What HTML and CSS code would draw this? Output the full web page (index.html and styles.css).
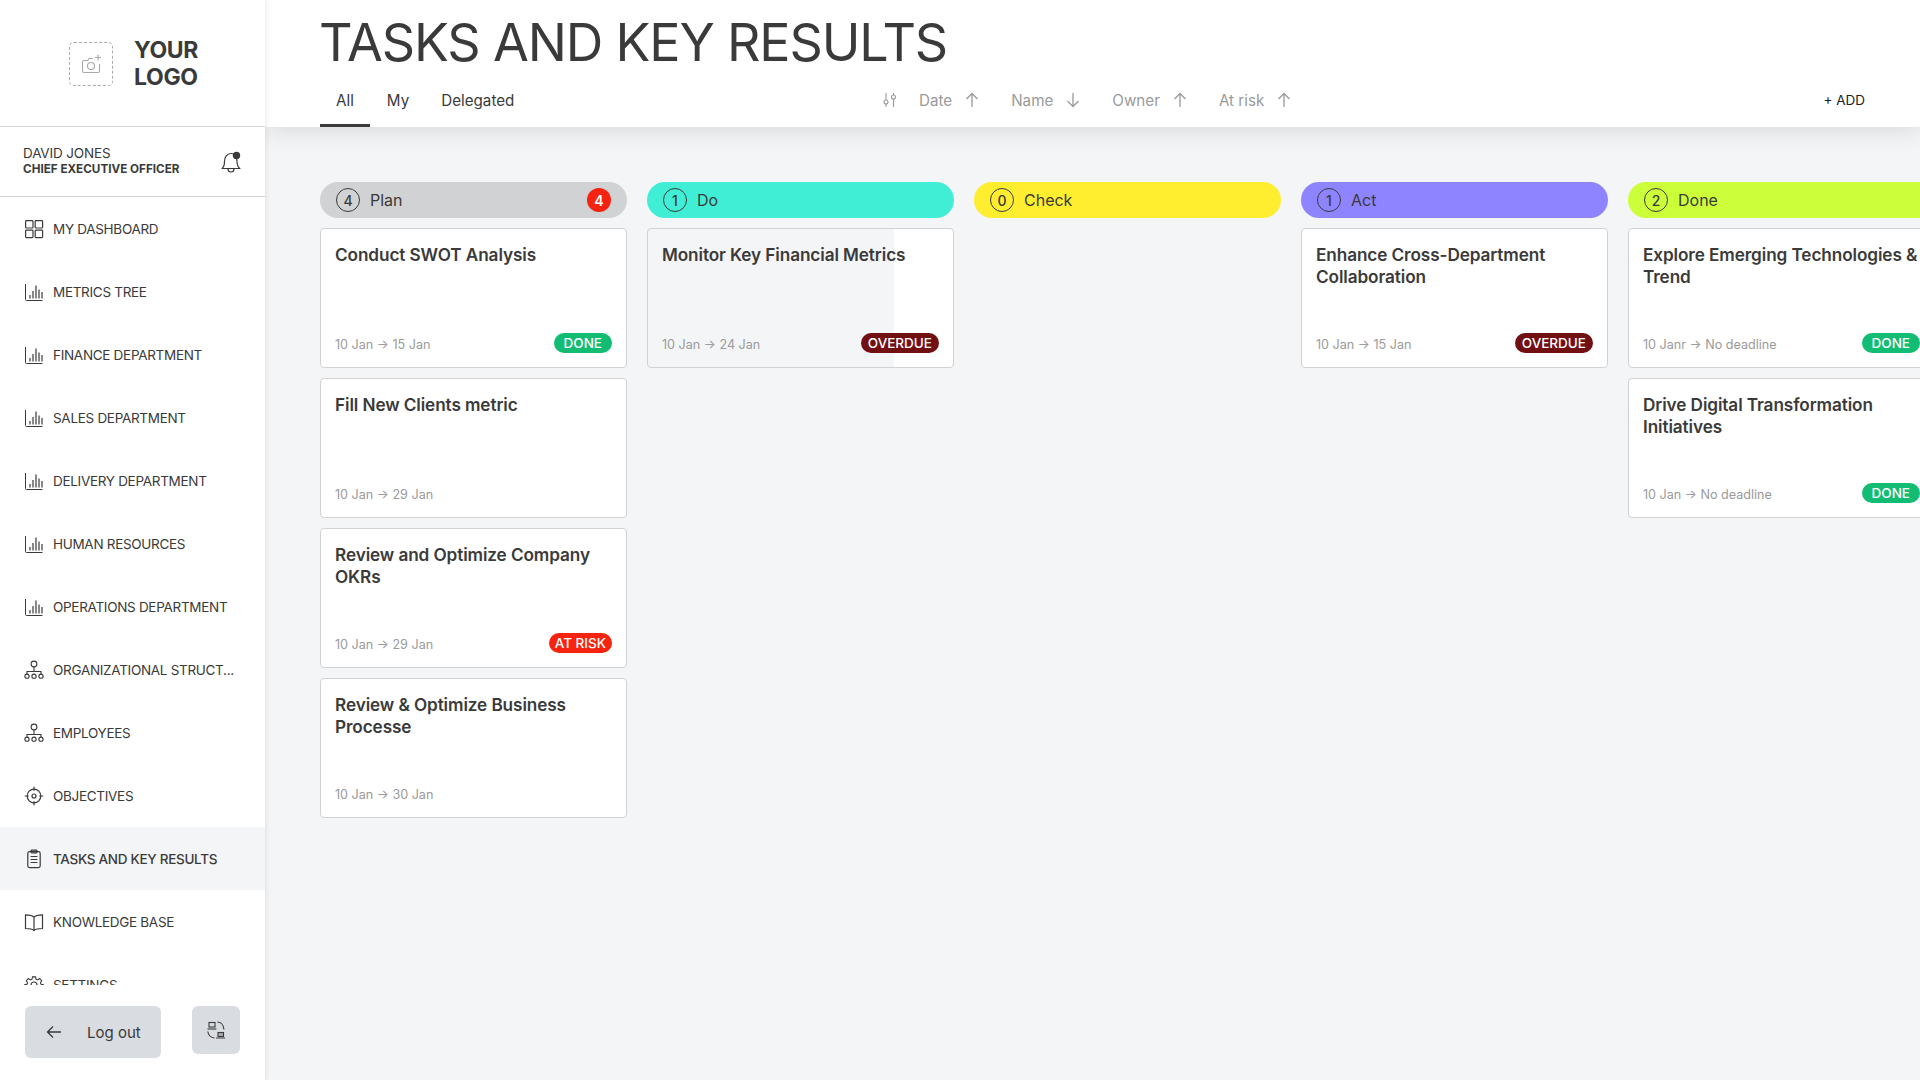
FILE: index.html
```html
<!DOCTYPE html>
<html lang="en">
<head>
<meta charset="utf-8">
<title>Tasks and Key Results</title>
<link rel="stylesheet" href="styles.css">
</head>
<body>
<svg class="defs" width="0" height="0" aria-hidden="true">
  <symbol id="i-dash" viewBox="0 0 22 22"><g fill="none" stroke="currentColor" stroke-width="1.2"><rect x="2.6" y="2.6" width="7.4" height="7.4" rx=".8"/><rect x="12.2" y="2.6" width="7.4" height="7.4" rx=".8"/><rect x="2.6" y="12.2" width="7.4" height="7.4" rx=".8"/><rect x="12.2" y="12.2" width="7.4" height="7.4" rx=".8"/></g></symbol>
  <symbol id="i-chart" viewBox="0 0 22 22"><g fill="none" stroke="currentColor" stroke-width="1"><path d="M2.5 3v15.5a1 1 0 0 0 1 1h16"/><path d="M7 14v3.5M10 10v7.5M13 4.5v13M16 8.5v9M19 11v6.5" stroke-width="1.2"/></g></symbol>
  <symbol id="i-org" viewBox="0 0 22 22"><g fill="none" stroke="currentColor" stroke-width="1.1"><circle cx="11" cy="5" r="2.9"/><path d="M11 8v5M4 15v-2.5h14V15"/><circle cx="4" cy="17.2" r="2.1"/><circle cx="11" cy="17.2" r="2.1"/><circle cx="18" cy="17.2" r="2.1"/></g></symbol>
  <symbol id="i-target" viewBox="0 0 22 22"><g fill="none" stroke="currentColor" stroke-width="1.2"><circle cx="11" cy="11" r="6.8"/><circle cx="11" cy="11" r="2"/><path d="M11 1.8v4M11 16.2v4M1.8 11h4M16.2 11h4"/></g></symbol>
  <symbol id="i-clip" viewBox="0 0 22 22"><g fill="none" stroke="currentColor" stroke-width="1.2"><rect x="4.8" y="3.6" width="12.4" height="16" rx="1.8"/><rect x="8" y="2.2" width="6" height="2.6" rx=".8"/><path d="M7.6 8.5h6.8M7.6 11.5h6.8M7.6 14.5h6.8"/></g></symbol>
  <symbol id="i-book" viewBox="0 0 22 22"><g fill="none" stroke="currentColor" stroke-width="1.2"><path d="M11 6.200C9.500 4.200 7 3.800 2.500 3.800v13.700c4.500 0 7 .4 8.500 2 1.500-1.600 4-2 8.500-2V3.800C15 3.800 12.500 4.200 11 6.200zM11 6.200v13.300" stroke-linejoin="round"/></g></symbol>
  <symbol id="i-gear" viewBox="0 0 22 22"><g fill="none" stroke="currentColor" stroke-width="1.2"><circle cx="11" cy="11" r="3"/><path d="M9.300 2.500h3.400l.5 2.600 1.800.8 2.200-1.500 2.400 2.400-1.500 2.200.8 1.800 2.500.5v3.400l-2.500.5-.8 1.800 1.500 2.200-2.400 2.400-2.200-1.500-1.800.8-.5 2.500H9.300l-.5-2.500-1.800-.8-2.200 1.500-2.400-2.400 1.500-2.200-.8-1.800-2.500-.5v-3.400l2.500-.5.8-1.800-1.500-2.200 2.400-2.400 2.200 1.500 1.800-.8z" transform="translate(1.100 .6) scale(.9)"/></g></symbol>
  <symbol id="i-up" viewBox="0 0 14 16"><path d="M7 15V1.500M1.500 7 7 1.500 12.500 7" fill="none" stroke="currentColor" stroke-width="1.3"/></symbol>
  <symbol id="i-down" viewBox="0 0 14 16"><path d="M7 1v13.500M1.500 9 7 14.500 12.500 9" fill="none" stroke="currentColor" stroke-width="1.3"/></symbol>
</svg>

<div class="app">
  <aside class="sidebar">
    <div class="brand">
      <div class="logo-box">
        <svg width="24" height="24" viewBox="0 0 24 24" fill="none" stroke="#a9a9a9" stroke-width="1.1"><path d="M14 6.500H10L8.800 8.500H5a1.500 1.500 0 0 0-1.500 1.500v9A1.500 1.500 0 0 0 5 20.500h14a1.500 1.500 0 0 0 1.500-1.500v-7"/><circle cx="12" cy="14" r="3.500"/><path d="M19 2.500v6M16 5.500h6"/></svg>
      </div>
      <div class="logo-text">YOUR<br>LOGO</div>
    </div>
    <div class="user">
      <div class="user-info">
        <div class="user-name">DAVID JONES</div>
        <div class="user-role">CHIEF EXECUTIVE OFFICER</div>
      </div>
      <svg class="bell" width="22" height="24" viewBox="0 0 22 24" fill="none" stroke="#3a3a3a" stroke-width="1.2"><path d="M2 18.500c2-1.500 2.500-3.500 2.500-7C4.500 7 7 3.500 11 3.500c3.500 0 6 3 6 8 0 3.500.8 5.500 3 7z" stroke-linejoin="round"/><path d="M8 19c0 4 6 4 6 0"/><circle cx="16.500" cy="5.500" r="3.700" fill="#3a3a3a" stroke="none"/></svg>
    </div>
    <nav class="nav">
      <a class="nav-item"><svg class="nav-icon"><use href="#i-dash"/></svg><span>MY DASHBOARD</span></a>
      <a class="nav-item"><svg class="nav-icon"><use href="#i-chart"/></svg><span>METRICS TREE</span></a>
      <a class="nav-item"><svg class="nav-icon"><use href="#i-chart"/></svg><span>FINANCE DEPARTMENT</span></a>
      <a class="nav-item"><svg class="nav-icon"><use href="#i-chart"/></svg><span>SALES DEPARTMENT</span></a>
      <a class="nav-item"><svg class="nav-icon"><use href="#i-chart"/></svg><span>DELIVERY DEPARTMENT</span></a>
      <a class="nav-item"><svg class="nav-icon"><use href="#i-chart"/></svg><span>HUMAN RESOURCES</span></a>
      <a class="nav-item"><svg class="nav-icon"><use href="#i-chart"/></svg><span>OPERATIONS DEPARTMENT</span></a>
      <a class="nav-item"><svg class="nav-icon"><use href="#i-org"/></svg><span>ORGANIZATIONAL STRUCT...</span></a>
      <a class="nav-item"><svg class="nav-icon"><use href="#i-org"/></svg><span>EMPLOYEES</span></a>
      <a class="nav-item"><svg class="nav-icon"><use href="#i-target"/></svg><span>OBJECTIVES</span></a>
      <a class="nav-item is-active"><svg class="nav-icon"><use href="#i-clip"/></svg><span>TASKS AND KEY RESULTS</span></a>
      <a class="nav-item"><svg class="nav-icon"><use href="#i-book"/></svg><span>KNOWLEDGE BASE</span></a>
      <a class="nav-item"><svg class="nav-icon"><use href="#i-gear"/></svg><span>SETTINGS</span></a>
    </nav>
    <div class="side-foot">
      <button class="logout">
        <svg width="16" height="14" viewBox="0 0 16 14" fill="none" stroke="#3a3a3a" stroke-width="1.3"><path d="M15 7H1.500M7 1.500 1.500 7 7 12.500"/></svg>
        <span>Log out</span>
      </button>
      <button class="switch">
        <svg width="20" height="20" viewBox="0 0 20 20" fill="none" stroke="#3a3a3a" stroke-width="1.1"><rect x="3" y="2.500" width="6" height="4.500"/><path d="M1.500 9h9"/><rect x="12" y="12.500" width="5.500" height="4" fill="#3a3a3a" fill-opacity=".3"/><path d="M10 18h9M11.500 2c3 0 6 2.500 6.500 7.500M1.800 11.500c.5 3.500 3 6.200 6.700 6.500"/></svg>
      </button>
    </div>
  </aside>

  <main class="main">
    <header class="topbar">
      <h1 class="title">TASKS AND KEY RESULTS</h1>
      <div class="toolbar">
        <div class="tabs">
          <a class="tab is-active">All</a>
          <a class="tab">My</a>
          <a class="tab">Delegated</a>
        </div>
        <div class="sorts">
          <svg class="sort-icon" width="14" height="16" viewBox="0 0 14 16" fill="none" stroke="currentColor" stroke-width="1.100"><path d="M3 1v7M3 12v3M10.500 1v2M10.500 7v8"/><circle cx="3" cy="10" r="2"/><circle cx="10.500" cy="5" r="2"/></svg>
          <div class="sort"><span>Date</span><svg class="arrow"><use href="#i-up"/></svg></div>
          <div class="sort"><span>Name</span><svg class="arrow"><use href="#i-down"/></svg></div>
          <div class="sort"><span>Owner</span><svg class="arrow"><use href="#i-up"/></svg></div>
          <div class="sort"><span>At risk</span><svg class="arrow"><use href="#i-up"/></svg></div>
        </div>
        <a class="add">+ ADD</a>
      </div>
    </header>

    <section class="board">
      <div class="col">
        <div class="pill pill-plan"><span class="count">4</span><span class="pill-label">Plan</span><span class="alert">4</span></div>
        <article class="card">
          <h3 class="card-title">Conduct SWOT Analysis</h3>
          <div class="card-foot"><span class="dates">10 Jan → 15 Jan</span><span class="badge badge-done">DONE</span></div>
        </article>
        <article class="card">
          <h3 class="card-title">Fill New Clients metric</h3>
          <div class="card-foot"><span class="dates">10 Jan → 29 Jan</span></div>
        </article>
        <article class="card">
          <h3 class="card-title">Review and Optimize Company OKRs</h3>
          <div class="card-foot"><span class="dates">10 Jan → 29 Jan</span><span class="badge badge-risk">AT RISK</span></div>
        </article>
        <article class="card">
          <h3 class="card-title">Review &amp; Optimize Business Processe</h3>
          <div class="card-foot"><span class="dates">10 Jan → 30 Jan</span></div>
        </article>
      </div>
      <div class="col">
        <div class="pill pill-do"><span class="count">1</span><span class="pill-label">Do</span></div>
        <article class="card card-progress">
          <h3 class="card-title">Monitor Key Financial Metrics</h3>
          <div class="card-foot"><span class="dates">10 Jan → 24 Jan</span><span class="badge badge-overdue">OVERDUE</span></div>
        </article>
      </div>
      <div class="col">
        <div class="pill pill-check"><span class="count">0</span><span class="pill-label">Check</span></div>
      </div>
      <div class="col">
        <div class="pill pill-act"><span class="count">1</span><span class="pill-label">Act</span></div>
        <article class="card">
          <h3 class="card-title">Enhance Cross-Department Collaboration</h3>
          <div class="card-foot"><span class="dates">10 Jan → 15 Jan</span><span class="badge badge-overdue">OVERDUE</span></div>
        </article>
      </div>
      <div class="col">
        <div class="pill pill-done"><span class="count">2</span><span class="pill-label">Done</span></div>
        <article class="card">
          <h3 class="card-title">Explore Emerging Technologies &amp; Trend</h3>
          <div class="card-foot"><span class="dates">10 Janr → No deadline</span><span class="badge badge-done">DONE</span></div>
        </article>
        <article class="card">
          <h3 class="card-title">Drive Digital Transformation Initiatives</h3>
          <div class="card-foot"><span class="dates">10 Jan → No deadline</span><span class="badge badge-done">DONE</span></div>
        </article>
      </div>
    </section>
  </main>
</div>
</body>
</html>
```
FILE: styles.css
```css
* { box-sizing: border-box; }
html, body { margin: 0; height: 100%; overflow: hidden; }
body { font-family: Inter, "Noto Sans", sans-serif; color: #3a3a3a; background: #f4f5f7; }
.defs { position: absolute; }

.app { display: flex; height: 1080px; width: 1920px; overflow: hidden; }

/* Sidebar */
.sidebar { flex: 0 0 265px; display: flex; flex-direction: column; background: #fff; box-shadow: 0 0 6px rgba(0,0,0,.12); position: relative; z-index: 2; }
.brand { height: 127px; flex: none; display: flex; align-items: flex-start; padding: 37px 0 0 69px; gap: 21px; border-bottom: 1px solid #d4d5d7; }
.logo-box { width: 44px; height: 44px; margin-top: 5px; border: 1px dashed #a9a9a9; border-radius: 5px; display: flex; align-items: center; justify-content: center; }
.logo-text { font-size: 23px; line-height: 27px; font-weight: 700; letter-spacing: -.35px; }
.user { height: 70px; flex: none; display: flex; align-items: center; justify-content: space-between; padding: 0 23px 1px; border-bottom: 1px solid #d4d5d7; }
.user-name { font-size: 13.5px; line-height: 15px; letter-spacing: -.15px; }
.user-role { font-size: 11.7px; line-height: 16px; font-weight: 700; }
.bell { margin-top: 2px; }
.nav { flex: 1; min-height: 0; overflow: hidden; }
.nav-item { height: 63px; display: flex; align-items: center; gap: 8px; padding-left: 23px; font-size: 13.5px; letter-spacing: -.3px; white-space: nowrap; }
.nav-item.is-active { background: #f4f5f7; font-weight: 500; }
.nav-icon { width: 22px; height: 22px; flex: none; }
.side-foot { height: 95px; flex: none; display: flex; align-items: flex-start; gap: 31px; padding: 21px 25px 0; }
.logout { width: 136px; height: 52px; display: flex; align-items: center; gap: 25px; padding: 0 0 0 21px; border: 0; border-radius: 6px; background: #d9dce0; color: #3a3a3a; font: 400 15px Inter, sans-serif; }
.switch { width: 48px; height: 48px; display: flex; align-items: center; justify-content: center; padding: 0; border: 0; border-radius: 6px; background: #d9dce0; }

/* Header */
.main { flex: 1; min-width: 0; display: flex; flex-direction: column; overflow: hidden; }
.topbar { height: 127px; flex: none; background: #fff; padding: 0 55px; box-shadow: 0 2px 26px rgba(0,0,0,.13); position: relative; z-index: 1; display: flex; flex-direction: column; }
.title { margin: 12px 0 0 -1px; font-size: 52px; line-height: 62px; font-weight: 400; letter-spacing: -1.15px; white-space: nowrap; }
.toolbar { display: flex; align-items: stretch; margin-top: auto; height: 54px; }
.tabs { display: flex; flex: 0 0 563px; }
.tab { display: flex; align-items: center; padding: 2px 16px 0; font-size: 15.2px; border-bottom: 3px solid transparent; }
.tab.is-active { border-bottom-color: #3a3a3a; margin-right: 1px; }
.sorts { display: flex; align-items: center; gap: 32px; color: #9a9a9a; font-size: 15.2px; padding-bottom: 1px; }
.sort-icon { margin-right: -10px; }
.sort { display: flex; align-items: center; gap: 13px; }
.arrow { width: 14px; height: 16px; }
.add { margin-left: auto; display: flex; align-items: center; padding-bottom: 1px; font-size: 13.5px; color: #222; }

/* Board */
.board { flex: 1; display: flex; gap: 20px; padding: 55px 0 0 55px; overflow: hidden; }
.col { flex: 0 0 307px; display: flex; flex-direction: column; gap: 10px; }
.pill { height: 36px; border-radius: 18px; display: flex; align-items: center; padding: 0 16px; font-size: 16px; }
.pill-plan { background: #d1d2d4; }
.pill-do { background: #40eed6; }
.pill-check { background: #ffed2f; }
.pill-act { background: #8f84ff; }
.pill-done { background: #ccff3a; }
.count { width: 24px; height: 24px; border: 1px solid #3a3a3a; border-radius: 50%; display: flex; align-items: center; justify-content: center; font-size: 14px; font-weight: 500; }
.pill-label { margin-left: 10px; }
.alert { margin-left: auto; width: 24px; height: 24px; border-radius: 50%; background: #f5230f; color: #fff; display: flex; align-items: center; justify-content: center; font-size: 14px; font-weight: 600; }

.card { height: 140px; background: #fff; border: 1px solid #d1d2d4; border-radius: 4px; padding: 15px 14px 14px; display: flex; flex-direction: column; }
.card-progress { background: linear-gradient(90deg, #f4f5f7 0 246px, #fff 246px); }
.card-title { margin: 0; font-size: 17.2px; line-height: 22px; font-weight: 570; letter-spacing: -.1px; }
.card-foot { margin-top: auto; display: flex; align-items: center; justify-content: space-between; height: 20px; }
.dates { font-size: 12.6px; color: #9a9a9a; padding-top: 2px; }
.badge { height: 20px; border-radius: 10px; display: flex; align-items: center; color: #fff; font-size: 13.5px; font-weight: 500; }
.badge-done { background: #13bc73; padding: 0 10px; }
.badge-overdue { background: #720f12; padding: 0 7px; }
.badge-risk { background: #f5230f; padding: 0 6px; }
```
